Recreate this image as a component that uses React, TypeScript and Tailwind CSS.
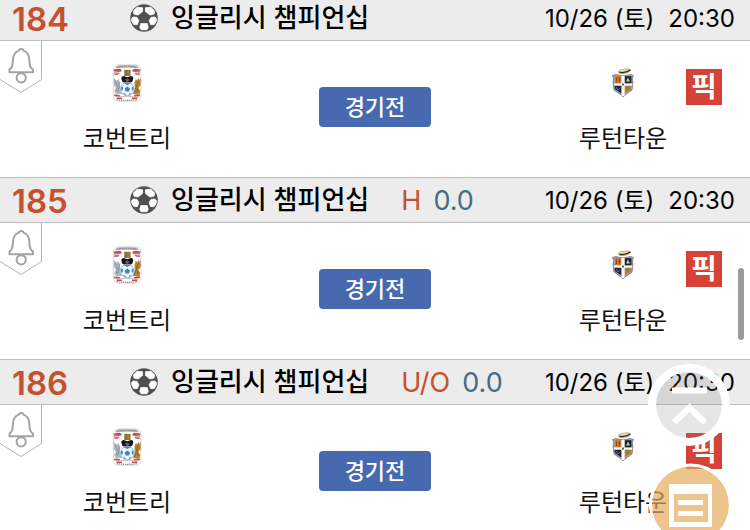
import React from "react";

type T_Match = {
  id: number;
  type?: string;
  value?: string;
};

const matches: T_Match[] = [
  { id: 184 },
  { id: 185, type: "H", value: "0.0" },
  { id: 186, type: "U/O", value: "0.0" },
];

function SoccerBall() {
  return (
    <svg viewBox="0 0 28 28" className="size-7 shrink-0" aria-hidden="true">
      <circle cx="14" cy="14" r="13.8" fill="#505050" />
      <g fill="#fff" stroke="#fff" strokeWidth=".8" strokeLinejoin="round">
        <path d="M7.2 3.2 12.6 3.8 12.6 7.4 8 11 3.8 10 3.6 6.6Z" />
        <path d="M20.8 3.2 15.4 3.8 15.4 7.4 20 11 24.2 10 24.4 6.6Z" />
        <path d="M1.6 14.4 3.4 13 7 13.4 8.8 16.6 7.4 20.6 3.8 20.6 1.8 17.4Z" />
        <path d="M26.4 14.4 24.6 13 21 13.4 19.2 16.6 20.6 20.6 24.2 20.6 26.2 17.4Z" />
        <path d="M10.8 19.6H17.2L18.2 23.4 17 25.8H11L9.8 23.4Z" />
      </g>
    </svg>
  );
}

function BellTab() {
  return (
    <svg viewBox="0 0 42 53" className="h-[53px] w-[42px]" fill="none">
      <path d="M41.5 0V38.5L21 51.5 0 38.5" stroke="#b3b3b3" />
      <path
        d="M9.5 31.2V28.6C11.6 27.2 12.4 25.4 12.6 22.5L13 18.5C13.3 13.5 15.6 10.7 19 9.6 19 7.6 23.4 7.6 23.4 9.6 26.8 10.7 29 13.5 29.3 18.5L29.6 22.5C29.8 25.4 30.8 27.2 33 28.6V31.2Z"
        stroke="#a3a3a3"
        strokeWidth="2"
        strokeLinejoin="round"
      />
      <circle cx="21.2" cy="36.8" r="4.6" stroke="#a3a3a3" strokeWidth="2" />
    </svg>
  );
}

function CoventryCrest() {
  return (
    <svg viewBox="0 0 30 38" className="h-[38px] w-[30px]" aria-hidden="true">
      <rect x="1.3" y=".8" width="27.6" height="36.4" rx="5" fill="#fff" stroke="#cfcfcf" strokeWidth=".8" />
      <path d="M3 4.6Q4 1.2 8 1.2H22Q26 1.2 27 4.6Q15 2.8 3 4.6Z" fill="#b5b5b5" />
      <path d="M5 3.2Q15 1.2 25 3.2" stroke="#777" strokeWidth=".8" strokeDasharray="1.4 .8" fill="none" />
      <path d="M1.6 5.6 8 4.8 10 6.6 7 8 2 7.6ZM2 9.4 7.5 9 6.5 10.6 2.6 11ZM28.6 5.6 22 4.8 20 6.6 23 8 28 7.6ZM28 9.4 22.5 9 23.5 10.6 27.6 11Z" fill="#c44a58" />
      <path d="M2 8.4 9.5 7.6M28 8.4 20.5 7.6" stroke="#8d8d8d" strokeWidth=".8" />
      <path d="M12.2 5.8H18.6V12H12.2Z" fill="#9a7a3c" />
      <path d="M14.2 6V12" stroke="#75602f" strokeWidth=".8" />
      <path d="M9.2 14Q10 11.6 12.5 12.2L15.3 13.2 18.2 12.2Q20.8 11.6 21.4 14L20.4 17.6 17.6 19.2H13.2L10.2 17.6Z" fill="#19161b" />
      <path d="M13 15.6 15.2 14.4 17.6 15.8 16.2 17.4H14.2Z" fill="#7c5560" />
      <path d="M1.8 14 4.5 16.5 6.5 15 8.2 19 8 26 10 30 4 30.5 2 27 4 24 1.8 21Z" fill="#b0b9c3" />
      <path d="M3 17 5.5 22 4.5 27M7 18V24L5.5 28" stroke="#7f8b99" strokeWidth=".8" fill="none" />
      <path d="M28.6 13.5 27.6 16 26.4 13.8 25.2 16.5 23.8 14.8 22.4 19 23 25 20.8 30 27.4 31 28.2 27 26.4 24 28.8 21Z" fill="#b78232" />
      <path d="M26.5 17 24.5 22 26 28M23.5 24 22.5 29" stroke="#80571f" strokeWidth=".8" fill="none" />
      <circle cx="15.3" cy="25" r="6.8" fill="#f1f8fd" stroke="#86b3d6" strokeWidth=".9" />
      <path d="M15.3 22.4 18 24.4 17 27.4H13.6L12.6 24.4ZM12 19.6 15.3 18.6 18.5 19.6 15.3 21ZM8.8 23.4 10.6 22.4 11 25.4 9.7 26.9ZM21.8 23.4 20 22.4 19.6 25.4 20.9 26.9ZM11 29.4 13 29.2 14 31.4ZM19.6 29.4 17.6 29.2 16.6 31.4Z" fill="#3786c4" />
      <path d="M2 30.6 8.4 31.2 7.6 32.8 2.2 32.2ZM28 30.6 21.6 31.2 22.4 32.8 27.8 32.2ZM4 33.6H10V35H5ZM26 33.6H20V35H25Z" fill="#c44a58" />
      <path d="M8 32.8Q15 31.8 22 32.8" stroke="#b5b5b5" strokeWidth=".8" fill="none" />
      <path d="M4.5 35.6Q15 37 25.5 35.6" stroke="#888" strokeWidth="1.2" strokeDasharray="1.4 .7" fill="none" />
    </svg>
  );
}

function LutonCrest() {
  return (
    <svg viewBox="0 0 24 30" className="h-[30px] w-6" aria-hidden="true">
      <path d="M7 4Q8 1 13 1.2Q16 0 19.5 1.5L17 2.5 19 3.5Q14 7 8 5.4Z" fill="#f1df8b" stroke="#8d8663" strokeWidth=".5" />
      <path d="M8.5 4.1Q13 5.6 19.5 2" stroke="#252736" strokeWidth="1.2" fill="none" />
      <path d="M1.5 7.5 4.5 6.5 12 8 19.5 6.5 22.5 7.5 21.3 10.5 22 14 21 22 16 25.5 12 29 8 25.5 3 22 2 14 2.7 10.5Z" fill="#a3a4a8" stroke="#65676d" strokeWidth=".7" />
      <path d="M3.8 8H11V16H3.8Z" fill="#d5792e" />
      <path d="M5.5 9.5V14M8.5 9V14.5M7 10.5 9.5 12" stroke="#8a4a20" strokeWidth="1" />
      <path d="M13.5 8.2H20.4V16H13.5Z" fill="#17243f" />
      <path d="M15 13.5 17 9.5 19 13.5Z" fill="#d4c68b" />
      <path d="M3.5 17.5H11V26L4 21Z" fill="#17243f" />
      <path d="M5 19 7 22 9.5 19.5" stroke="#73829e" strokeWidth=".8" fill="none" />
      <path d="M13.5 17.5H20.5L20 21 13.5 26Z" fill="#d5792e" />
      <circle cx="16.7" cy="20.3" r="2.2" fill="#7d8b37" />
      <path d="M10.4 8H13.6V27.5L12 28.5 10.4 27.5Z" fill="#fff" />
      <path d="M3 15.4H21.2V17.6H3Z" fill="#fff" />
      <path d="M11 16.6H13" stroke="#725b2b" strokeWidth="2" />
    </svg>
  );
}

function Team({ name, children }: { name: string; children: React.ReactNode }) {
  return (
    <div className="flex w-[254px] flex-col items-center pt-5">
      <div className="flex h-11 items-center justify-center">{children}</div>
      <p className="mt-4 text-2xl leading-9 text-[#111]">{name}</p>
    </div>
  );
}

function Match({ id, type, value }: T_Match) {
  return (
    <section>
      <header className="flex h-[46px] items-center border-y border-[#bebebe] bg-[#ececec] pr-[15px] pl-3 leading-8 text-black">
        <span className="w-[118px] pt-0.5 text-[33px] font-semibold text-[#c4512f]">
          {id}
        </span>
        <SoccerBall />
        <h2 className="ml-[13px] text-[26px] font-medium">잉글리시 챔피언십</h2>
        {type && (
          <p className="ml-8 flex gap-3 pt-0.5 text-[27px] text-[#476c82]">
            <span className="text-[#c4512f]">{type}</span>
            <span>{value}</span>
          </p>
        )}
        <p className="ml-auto flex gap-3.5 pt-0.5 text-2xl leading-8">
          <span>10/26 (토)</span>
          <time>20:30</time>
        </p>
      </header>
      <div className="relative flex h-[136px] items-start justify-between bg-white">
        <button aria-label="알림" className="absolute top-0 left-0">
          <BellTab />
        </button>
        <Team name="코번트리">
          <CoventryCrest />
        </Team>
        <button className="mt-[46px] h-10 w-28 rounded bg-[#4669af] text-[22px] font-medium text-white">
          경기전
        </button>
        <Team name="루턴타운">
          <LutonCrest />
        </Team>
        <button className="absolute top-7 right-7 flex size-9 items-center justify-center bg-[#d64235] text-[28px] leading-9 font-bold text-white">
          픽
        </button>
      </div>
    </section>
  );
}

export default function App() {
  return (
    <main className="relative h-screen overflow-hidden bg-white font-[Inter,'Noto_Sans_CJK_KR',sans-serif]">
      <div className="-mt-[5px]">
        {matches.map((match) => (
          <Match key={match.id} {...match} />
        ))}
      </div>

      <div className="absolute top-[268px] right-1.5 h-[72px] w-1.5 rounded-full bg-[#9c9c9c]" />

      <button aria-label="맨 위로" className="absolute top-[364px] right-5 size-[82px]">
        <svg viewBox="0 0 82 82" fill="none" stroke="#fff">
          <circle cx="41" cy="41" r="33" fill="#787878" fillOpacity=".19" stroke="none" />
          <circle cx="41" cy="41" r="37" strokeWidth="8" />
          <path d="M24 26.5H59" strokeWidth="6" />
          <path d="M26 58.5 41.5 43.5 57 58.5" strokeWidth="6" />
        </svg>
      </button>
      <button aria-label="목록" className="absolute top-[463px] right-[18px] size-[84px]">
        <svg viewBox="0 0 84 84" fill="none" stroke="#fff">
          <circle cx="42.5" cy="42" r="38.5" fill="#e5ab5b" fillOpacity=".7" stroke="none" />
          <circle cx="42.5" cy="42" r="40" strokeWidth="3" />
          <path d="M21 21H64V64H21ZM26 31V59H60V31Z" fill="#fff" fillRule="evenodd" stroke="none" />
          <path d="M30 39.5H55M30 50.5H55" strokeWidth="5" />
        </svg>
      </button>
    </main>
  );
}
